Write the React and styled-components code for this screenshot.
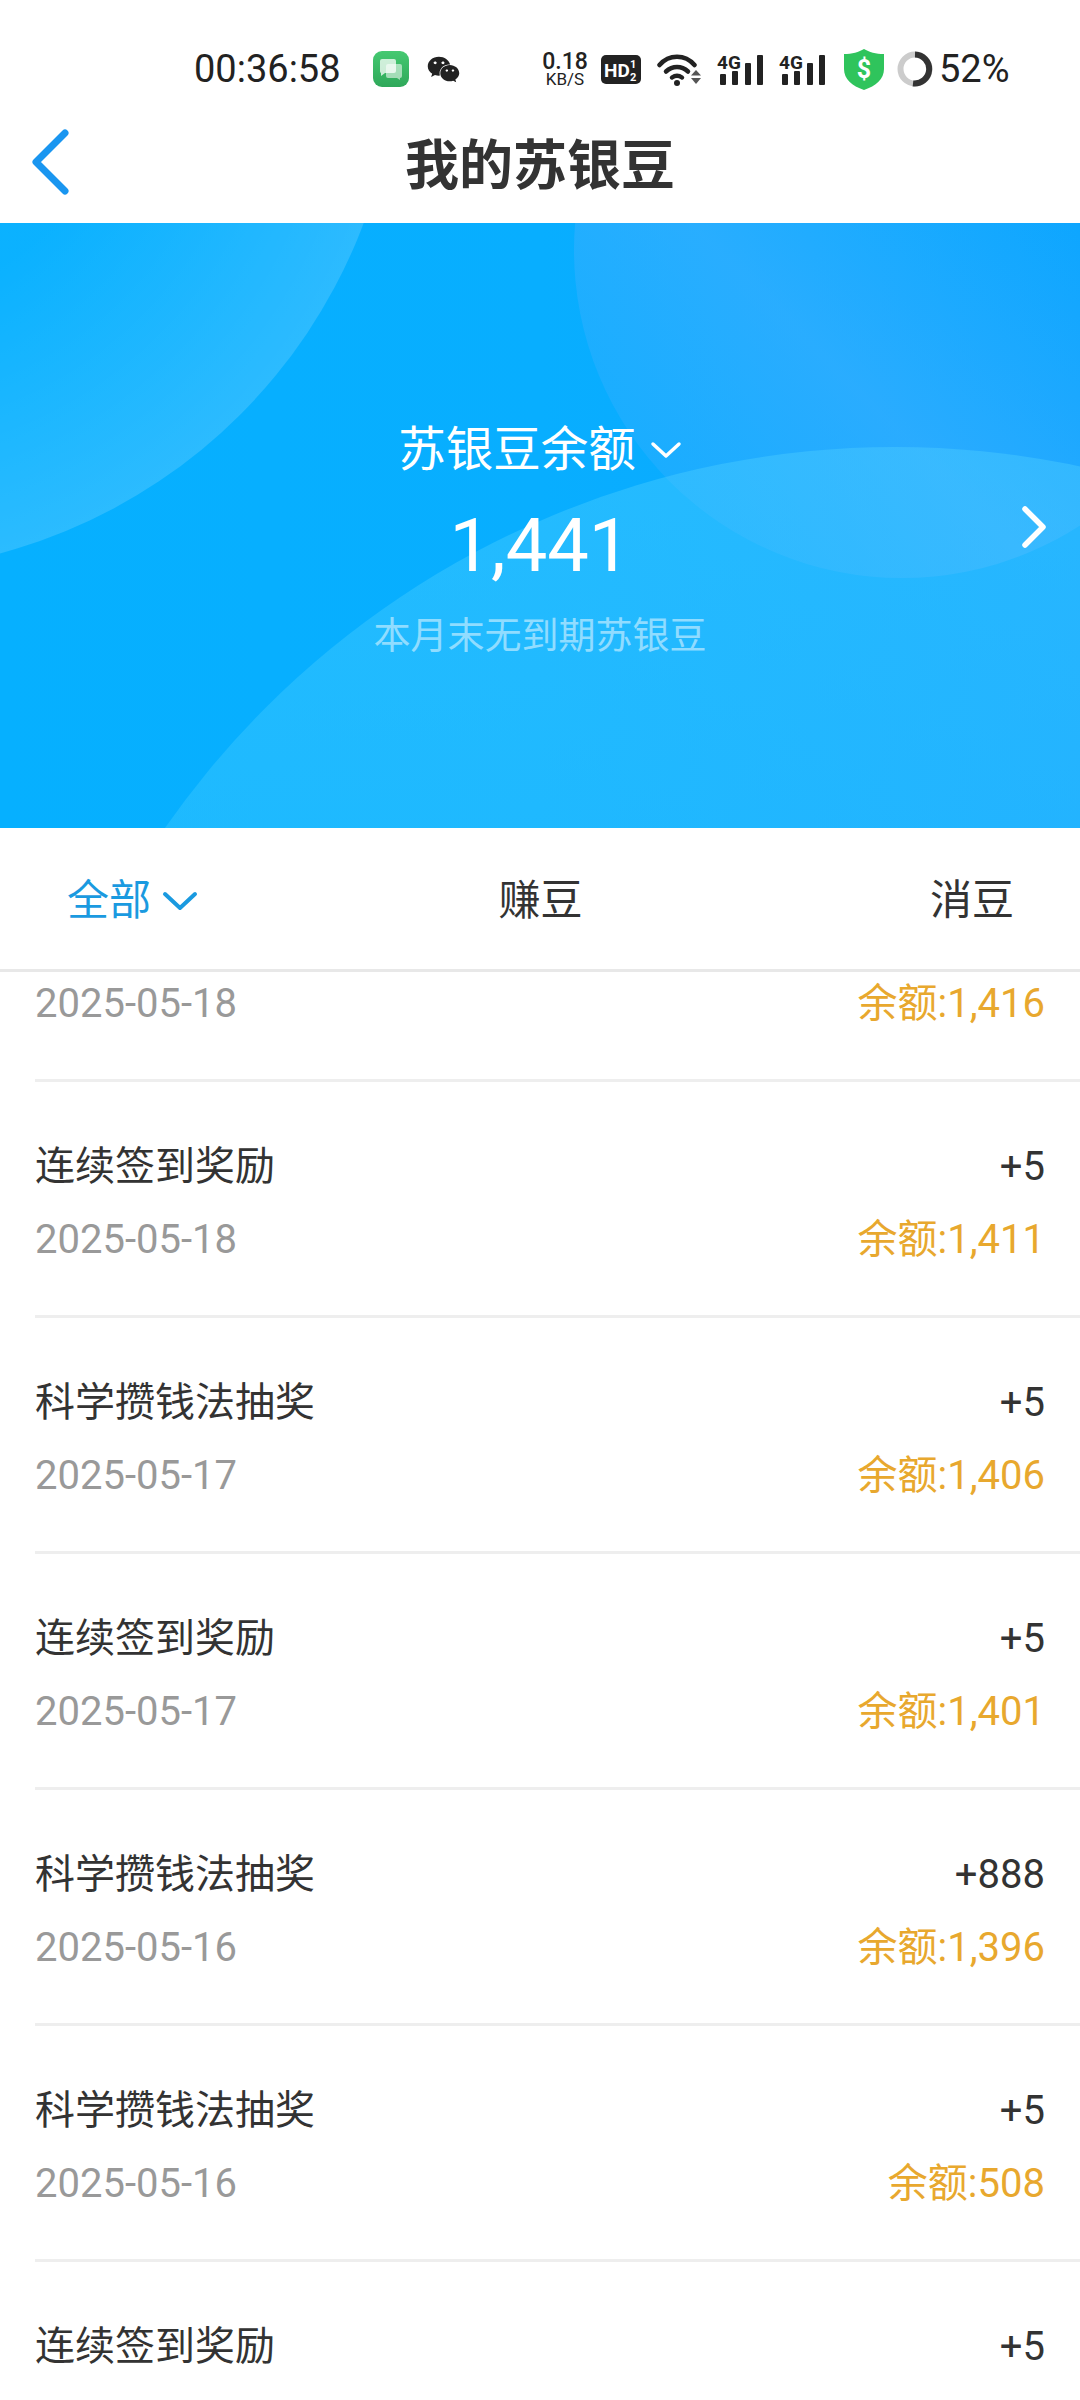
import React from 'react'
import styled, { createGlobalStyle } from 'styled-components'
import { FaWeixin } from 'react-icons/fa'

const GlobalStyle = createGlobalStyle`
  html, body {
    margin: 0;
    padding: 0;
    background: #fff;
    font-family: Roboto, "Noto Sans CJK SC", sans-serif;
  }
`

const Page = styled.div`
  width: 1080px;
  height: 2400px;
  overflow: hidden;
  display: flex;
  flex-direction: column;
  background: #fff;
  color: #333;
`

const StatusBar = styled.div`
  height: 110px;
  box-sizing: border-box;
  padding: 28px 0 0 194px;
  display: flex;
  align-items: center;
  flex-shrink: 0;
  color: #222;
`

const Time = styled.span`
  font-size: 38px;
  line-height: 1;
  width: 179px;
`

const AppIcons = styled.div`
  display: flex;
  align-items: center;
  gap: 18px;
  width: 170px;
`

const Speed = styled.div`
  width: 44px;
  margin-right: 14px;
  display: flex;
  flex-direction: column;
  align-items: center;
  white-space: nowrap;
  .value { font-size: 23px; font-weight: 500; line-height: 21px; }
  .unit { font-size: 17px; line-height: 15px; }
`

const SysIcons = styled.div`
  display: flex;
  align-items: center;
  gap: 16px;
`

const SignalWrap = styled.svg`
  margin: -3px 0;
`

const ShieldWrap = styled.svg`
  margin: 0 -3px 0 3px;
`

const Battery = styled.span`
  font-size: 38px;
  line-height: 1;
  margin-left: -10px;
`

const NavBar = styled.div`
  height: 113px;
  flex-shrink: 0;
  position: relative;
  display: flex;
  align-items: center;
  justify-content: center;
`

const BackButton = styled.svg`
  position: absolute;
  left: 29px;
  top: 18px;
`

const Title = styled.h1`
  margin: 0;
  font-size: 54px;
  font-weight: 700;
  color: #333;
  line-height: 1;
`

const Banner = styled.section`
  height: 605px;
  flex-shrink: 0;
  position: relative;
  overflow: hidden;
  background: linear-gradient(90deg, #06b0ff 0%, #08aeff 50%, #0ea6ff 100%);
  color: #fff;
  display: flex;
  flex-direction: column;
  align-items: center;
  padding-top: 194px;
  box-sizing: border-box;
`

const BannerArt = styled.svg`
  position: absolute;
  inset: 0;
`

const BalanceLabel = styled.div`
  position: relative;
  display: flex;
  align-items: center;
  gap: 14px;
  font-size: 47.5px;
  line-height: 66px;
`

const BalanceValue = styled.div`
  position: relative;
  font-size: 74px;
  font-weight: 400;
  line-height: 88px;
  margin-top: 19px;
`

const ExpireNote = styled.div`
  position: relative;
  font-size: 37px;
  line-height: 52px;
  margin-top: 21px;
  color: rgba(255, 255, 255, 0.5);
`

const ForwardArrow = styled.svg`
  position: absolute;
  right: 31px;
  top: 282px;
`

const Tabs = styled.nav`
  height: 144px;
  flex-shrink: 0;
  box-sizing: border-box;
  padding: 4px 66px 0 67px;
  display: grid;
  grid-template-columns: 1fr 1fr 1fr;
  align-items: center;
  border-bottom: 3px solid #e8e8e8;
  background: #fff;
`

const Tab = styled.div`
  display: flex;
  align-items: center;
  gap: 11px;
  font-size: 42px;
  line-height: 1;
  justify-content: ${p => p.$align};
  color: ${p => (p.$active ? '#1a9ae0' : '#333')};
`

const List = styled.div`
  flex: 1;
  overflow: hidden;
`

// the first row is scrolled under the tabs, only its lower line still shows
const Row = styled.div`
  height: ${p => (p.$scrolled ? 110 : 236)}px;
  box-sizing: border-box;
  margin-left: 35px;
  padding: ${p => (p.$scrolled ? 8 : 61)}px 35px 0 0;
  border-bottom: 3px solid #eee;
  display: grid;
  grid-template-columns: 1fr auto;
  grid-auto-rows: 73px;
  align-items: start;
`

const RowTitle = styled.div`
  font-size: 40px;
  line-height: 48px;
  color: #333;
`

const Amount = styled.div`
  font-size: 40px;
  line-height: 48px;
  color: #333;
  text-align: right;
`

const RowDate = styled.div`
  font-size: 40px;
  line-height: 48px;
  color: #999;
`

const Remain = styled.div`
  font-size: 40px;
  line-height: 48px;
  color: #e8a82e;
  text-align: right;
`

const records = [
  { title: '连续签到奖励', amount: '+5', date: '2025-05-18', remain: '1,411' },
  { title: '科学攒钱法抽奖', amount: '+5', date: '2025-05-17', remain: '1,406' },
  { title: '连续签到奖励', amount: '+5', date: '2025-05-17', remain: '1,401' },
  { title: '科学攒钱法抽奖', amount: '+888', date: '2025-05-16', remain: '1,396' },
  { title: '科学攒钱法抽奖', amount: '+5', date: '2025-05-16', remain: '508' },
]

const MessageIcon = () => (
  <svg width="36" height="36" viewBox="0 0 36 36">
    <defs>
      <linearGradient id="msgBg" x1="0" y1="0" x2="0" y2="1">
        <stop offset="0" stopColor="#45c971" />
        <stop offset="1" stopColor="#2fa85a" />
      </linearGradient>
    </defs>
    <rect width="36" height="36" rx="9" fill="url(#msgBg)" />
    <path d="M15 13h12a2 2 0 0 1 2 2v10a2 2 0 0 1-2 2v2l-3-2h-9a2 2 0 0 1-2-2V15a2 2 0 0 1 2-2z" fill="#fff" opacity="0.55" />
    <path d="M9 8h12a2 2 0 0 1 2 2v10a2 2 0 0 1-2 2h-9l-4 3v-3a2 2 0 0 1-1-2V10a2 2 0 0 1 2-2z" fill="#fff" opacity="0.75" />
  </svg>
)

const HdBadge = () => (
  <svg width="40" height="29" viewBox="0 0 40 29">
    <rect width="40" height="29" rx="5" fill="#222" />
    <text x="3" y="22" fontFamily="Roboto" fontWeight="700" fontSize="19" fill="#fff">HD</text>
    <text x="29" y="13" fontFamily="Roboto" fontWeight="700" fontSize="11" fill="#fff">1</text>
    <text x="29" y="26" fontFamily="Roboto" fontWeight="700" fontSize="11" fill="#fff">2</text>
  </svg>
)

const WifiIcon = () => (
  <svg width="44" height="33" viewBox="0 0 44 33">
    <g fill="none" stroke="#222" strokeWidth="4.5" strokeLinecap="round">
      <path d="M2.500 12C12 1 28 1 37.500 12" />
      <path d="M9 18.500c6.500-6 15.500-6 22 0" />
      <path d="M15 24.500c3-2 7-2 10 0" />
    </g>
    <circle cx="20" cy="30" r="3" fill="#222" />
    <path d="M39 17l5 5.500H34z" fill="#555" />
    <path d="M34 25h10l-5 6z" fill="#555" />
  </svg>
)

const SignalIcon = () => (
  <SignalWrap width="46" height="37" viewBox="0 -3 46 37">
    <text x="0" y="15" fontFamily="Roboto" fontWeight="700" fontSize="19" fill="#222">4G</text>
    <rect x="3" y="20" width="6" height="11" rx="1" fill="#222" />
    <rect x="15" y="17" width="6" height="14" rx="1" fill="#222" />
    <rect x="28" y="9" width="6" height="22" rx="1" fill="#222" />
    <rect x="40" y="1" width="6" height="30" rx="1" fill="#222" />
  </SignalWrap>
)

const ShieldIcon = () => (
  <ShieldWrap width="40" height="41" viewBox="0 0 40 41">
    <path d="M20 0c5 3 12 5 20 5v15c0 10-8 17-20 21C8 37 0 30 0 20V5c8 0 15-2 20-5z" fill="#2fc45c" />
    <text x="20" y="29" textAnchor="middle" fontFamily="Roboto" fontWeight="700" fontSize="25" fill="#fff">$</text>
  </ShieldWrap>
)

const BatteryRing = () => (
  <svg width="36" height="36" viewBox="0 0 36 36">
    <circle cx="18" cy="18" r="14.500" fill="none" stroke="#ccc" strokeWidth="6" />
    <path d="M18 3.500A14.500 14.500 0 1 1 16 32.400" fill="none" stroke="#333" strokeWidth="6" />
  </svg>
)

const App = () => (
  <Page>
    <GlobalStyle />
    <StatusBar>
      <Time>00:36:58</Time>
      <AppIcons>
        <MessageIcon />
        <FaWeixin size={33} color="#222" />
      </AppIcons>
      <Speed>
        <span className="value">0.18</span>
        <span className="unit">KB/S</span>
      </Speed>
      <SysIcons>
        <HdBadge />
        <WifiIcon />
        <SignalIcon />
        <SignalIcon />
        <ShieldIcon />
        <BatteryRing />
        <Battery>52%</Battery>
      </SysIcons>
    </StatusBar>

    <NavBar>
      <BackButton width="42" height="70" viewBox="0 0 42 70" fill="none">
        <path d="M36 5L7 34l29 29" stroke="#1a96f0" strokeWidth="7" strokeLinecap="round" strokeLinejoin="round" />
      </BackButton>
      <Title>我的苏银豆</Title>
    </NavBar>

    <Banner>
      <BannerArt width="1080" height="605" viewBox="0 0 1080 605">
        <defs>
          <linearGradient id="topRight" x1="0.15" y1="0.85" x2="0.85" y2="0.15">
            <stop offset="0" stopColor="#4eb0ff" stopOpacity="0.25" />
            <stop offset="0.3" stopColor="#4eb0ff" stopOpacity="0.45" />
            <stop offset="0.72" stopColor="#4eb0ff" stopOpacity="0" />
          </linearGradient>
          <radialGradient id="topLeft">
            <stop offset="0.5" stopColor="#fff" stopOpacity="0.02" />
            <stop offset="1" stopColor="#fff" stopOpacity="0.15" />
          </radialGradient>
          <linearGradient id="lower" x1="0" y1="0" x2="0" y2="1">
            <stop offset="0" stopColor="#4fd0ff" stopOpacity="0.4" />
            <stop offset="0.4" stopColor="#4fd0ff" stopOpacity="0.25" />
          </linearGradient>
        </defs>
        <circle cx="-140" cy="-189" r="538" fill="url(#topLeft)" />
        <circle cx="902" cy="27" r="328" fill="url(#topRight)" />
        <circle cx="895" cy="1114" r="890" fill="url(#lower)" />
      </BannerArt>
      <BalanceLabel>
        苏银豆余额
        <svg width="32" height="18" viewBox="0 0 32 18" fill="none">
          <path d="M3 3l13 12L29 3" stroke="#fff" strokeWidth="3.500" strokeLinecap="round" strokeLinejoin="round" />
        </svg>
      </BalanceLabel>
      <BalanceValue>1,441</BalanceValue>
      <ExpireNote>本月末无到期苏银豆</ExpireNote>
      <ForwardArrow width="30" height="44" viewBox="0 0 30 44" fill="none">
        <path d="M6 4l18 18L6 40" stroke="#fff" strokeWidth="5.500" strokeLinecap="round" strokeLinejoin="round" />
      </ForwardArrow>
    </Banner>

    <Tabs>
      <Tab $active $align="flex-start">
        全部
        <svg width="36" height="22" viewBox="0 0 36 22" fill="none">
          <path d="M3 4l15 14L33 4" stroke="#1a9ae0" strokeWidth="4" strokeLinecap="round" strokeLinejoin="round" />
        </svg>
      </Tab>
      <Tab $align="center">赚豆</Tab>
      <Tab $align="flex-end">消豆</Tab>
    </Tabs>

    <List>
      <Row $scrolled>
        <RowDate>2025-05-18</RowDate>
        <Remain>余额:1,416</Remain>
      </Row>
      {records.map(r => (
        <Row key={r.remain}>
          <RowTitle>{r.title}</RowTitle>
          <Amount>{r.amount}</Amount>
          <RowDate>{r.date}</RowDate>
          <Remain>余额:{r.remain}</Remain>
        </Row>
      ))}
      <Row>
        <RowTitle>连续签到奖励</RowTitle>
        <Amount>+5</Amount>
      </Row>
    </List>
  </Page>
)

export default App
